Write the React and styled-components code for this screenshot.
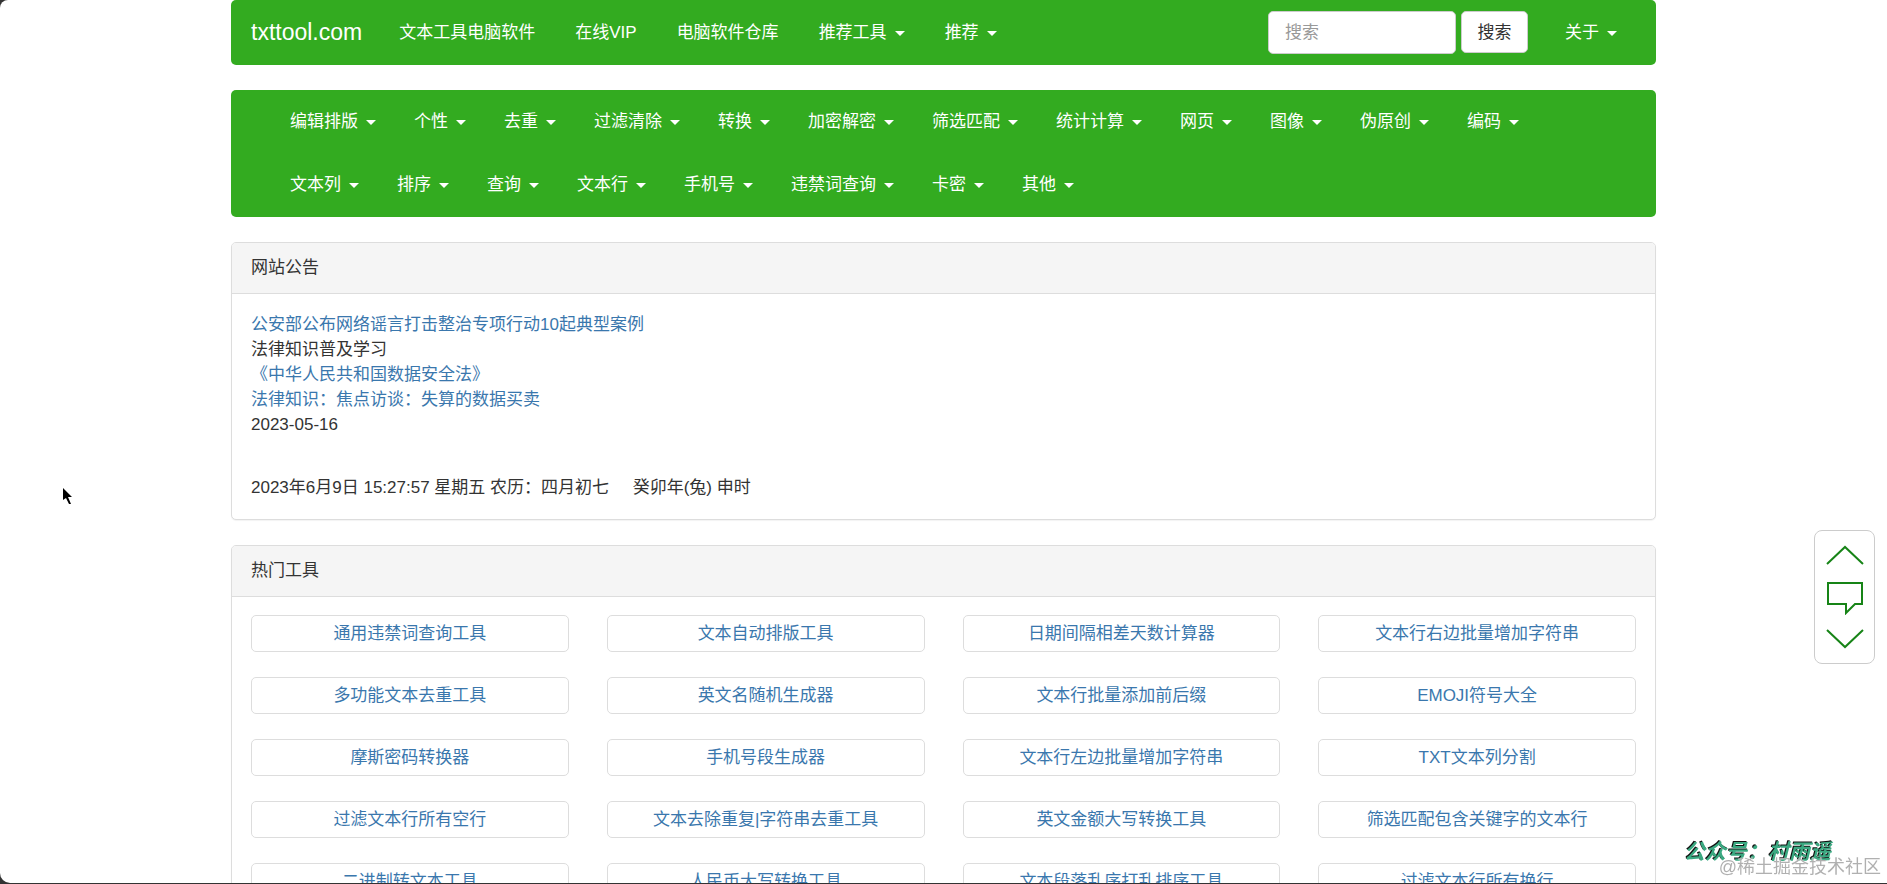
import React from "react";
import styled, { createGlobalStyle, css } from "styled-components";

const GlobalStyle = createGlobalStyle`
  *, *::before, *::after { box-sizing: border-box; }
  html { background: #333; }
  body {
    margin: 0;
    font-family: "Liberation Sans", "Noto Sans CJK SC", sans-serif;
    font-size: 17px;
    line-height: 25px;
    color: #333;
  }
  button, input { font: inherit; }
  a { color: #3a77ad; text-decoration: none; }
  ul { list-style: none; margin: 0; padding: 0; }
`;

const Screen = styled.div`
  position: relative;
  height: calc(100vh - 1px);
  overflow: hidden;
  background: #fff;
  border-radius: 8px 0 0 10px;
`;

const Container = styled.main`
  width: 100%;
  max-width: 1425px;
  margin: 0 auto;
  display: flex;
  flex-direction: column;
  gap: 25px;
`;

const bar = css`
  background: #33ab20;
  border-radius: 5px;
`;

const TopNav = styled.nav`
  ${bar}
  display: flex;
  flex-wrap: wrap;
  align-items: center;
  min-height: 65px;
  padding: 0 20px;
`;

const Brand = styled.a`
  color: #fff;
  font-size: 23px;
  margin-right: 17px;
`;

const NavList = styled.ul`
  display: flex;
  flex-wrap: wrap;
  flex: ${(p) => (p.$grow ? 1 : "none")};
`;

const CategoryNav = styled.nav`
  ${bar}
  padding: 0 40px 1px;
`;

const navItem = css`
  display: flex;
  align-items: center;
  height: 63px;
  padding: 0 ${(p) => p.$pad}px;
  color: #fff;
  white-space: nowrap;
`;

const NavLink = styled.a`
  ${navItem}
`;

const NavToggle = styled.button`
  ${navItem}
  gap: 8px;
  border: 0;
  background: none;
  cursor: pointer;
  &::after {
    content: "";
    margin-top: 2px;
    border: 5px solid transparent;
    border-top-color: #fff;
    border-bottom: 0;
  }
`;

const SearchForm = styled.form`
  display: flex;
  align-items: flex-start;
  gap: 5px;
  margin-right: 18px;
`;

const SearchInput = styled.input`
  width: 188px;
  height: 43px;
  padding: 0 16px;
  border: 1px solid #ccc;
  border-radius: 5px;
  background: #fff;
  &::placeholder { color: #999; opacity: 1; }
`;

const SearchButton = styled.button`
  width: 67px;
  height: 42px;
  padding: 0;
  border: 1px solid #ccc;
  border-radius: 5px;
  background: #fff;
  color: #333;
`;

const Panel = styled.section`
  border: 1px solid #ddd;
  border-radius: 5px;
  background: #fff;
  box-shadow: 0 1px 1px rgba(0, 0, 0, 0.05);
`;

const PanelHeading = styled.h2`
  margin: 0;
  padding: 12px 19px 13px;
  border-bottom: 1px solid #ddd;
  background: #f5f5f5;
  border-radius: 4px 4px 0 0;
  font-size: 17px;
  font-weight: 400;
`;

const PanelBody = styled.div`
  padding: 18px 19px 19px;
`;

const Notice = styled.p`
  margin: 0 0 38px;
`;

const Clock = styled.p`
  margin: 0;
  white-space: pre-wrap;
`;

const ToolGrid = styled.ul`
  display: grid;
  grid-template-columns: repeat(4, 1fr);
  gap: 25px 38px;
`;

const ToolLink = styled.a`
  display: block;
  padding: 5px;
  border: 1px solid #ddd;
  border-radius: 5px;
  text-align: center;
`;

const SideTools = styled.aside`
  position: fixed;
  right: 12px;
  bottom: 220px;
  display: flex;
  flex-direction: column;
  align-items: center;
  justify-content: space-between;
  width: 61px;
  height: 134px;
  padding: 14px 0;
  border: 1px solid #ccc;
  border-radius: 8px;
  background: #fff;
`;

const SideButton = styled.button`
  display: block;
  padding: 0;
  border: 0;
  background: none;
  svg { display: block; fill: none; stroke: #178417; stroke-width: 2; }
`;

const AccountMark = styled.div`
  position: fixed;
  right: 56px;
  bottom: 20px;
  color: #3aa981;
  font-size: 21px;
  font-style: italic;
  font-weight: 700;
  text-shadow: -1px -1px 0 #111;
`;

const CommunityMark = styled.div`
  position: fixed;
  right: 6px;
  bottom: 4px;
  color: rgba(150, 150, 150, 0.75);
  font-size: 18px;
  text-shadow: 0 0 1px #fff;
`;

const Pointer = styled.svg`
  position: fixed;
  left: 63px;
  top: 488px;
`;

const topLinks = ["文本工具电脑软件", "在线VIP", "电脑软件仓库"];
const topMenus = ["推荐工具", "推荐"];
const categories = [
  "编辑排版", "个性", "去重", "过滤清除", "转换", "加密解密", "筛选匹配",
  "统计计算", "网页", "图像", "伪原创", "编码", "文本列", "排序", "查询",
  "文本行", "手机号", "违禁词查询", "卡密", "其他",
];
const tools = [
  "通用违禁词查询工具", "文本自动排版工具", "日期间隔相差天数计算器", "文本行右边批量增加字符串",
  "多功能文本去重工具", "英文名随机生成器", "文本行批量添加前后缀", "EMOJI符号大全",
  "摩斯密码转换器", "手机号段生成器", "文本行左边批量增加字符串", "TXT文本列分割",
  "过滤文本行所有空行", "文本去除重复|字符串去重工具", "英文金额大写转换工具", "筛选匹配包含关键字的文本行",
  "二进制转文本工具", "人民币大写转换工具", "文本段落乱序打乱排序工具", "过滤文本行所有换行",
];

export default function App() {
  return (
    <Screen>
      <GlobalStyle />
      <Container>
        <TopNav aria-label="主导航">
          <Brand href="#">txttool.com</Brand>
          <NavList $grow>
            {topLinks.map((t) => (
              <li key={t}><NavLink $pad={20} href="#">{t}</NavLink></li>
            ))}
            {topMenus.map((t) => (
              <li key={t}><NavToggle $pad={20} type="button">{t}</NavToggle></li>
            ))}
          </NavList>
          <SearchForm role="search" onSubmit={(e) => e.preventDefault()}>
            <SearchInput type="text" placeholder="搜索" aria-label="搜索" />
            <SearchButton type="submit">搜索</SearchButton>
          </SearchForm>
          <NavToggle $pad={19} type="button">关于</NavToggle>
        </TopNav>

        <CategoryNav aria-label="工具分类">
          <NavList>
            {categories.map((t) => (
              <li key={t}><NavToggle $pad={19} type="button">{t}</NavToggle></li>
            ))}
          </NavList>
        </CategoryNav>

        <Panel>
          <PanelHeading>网站公告</PanelHeading>
          <PanelBody>
            <Notice>
              <a href="#">公安部公布网络谣言打击整治专项行动10起典型案例</a><br />
              法律知识普及学习<br />
              <a href="#">《中华人民共和国数据安全法》</a><br />
              <a href="#">法律知识：焦点访谈：失算的数据买卖</a><br />
              2023-05-16
            </Notice>
            <Clock>{"2023年6月9日 15:27:57 星期五 农历：四月初七\u00a0\u00a0\u00a0\u00a0 癸卯年(兔) 申时"}</Clock>
          </PanelBody>
        </Panel>

        <Panel>
          <PanelHeading>热门工具</PanelHeading>
          <PanelBody>
            <ToolGrid>
              {tools.map((t) => (
                <li key={t}><ToolLink href="#">{t}</ToolLink></li>
              ))}
            </ToolGrid>
          </PanelBody>
        </Panel>
      </Container>

      <SideTools aria-label="快捷操作">
        <SideButton type="button" aria-label="返回顶部">
          <svg width="38" height="20" viewBox="0 0 38 20"><path d="M1 19 19 2l18 17" /></svg>
        </SideButton>
        <SideButton type="button" aria-label="留言">
          <svg width="38" height="36" viewBox="0 0 38 36"><path d="M2 4h34v21h-7l-9 9v-9H2z" /></svg>
        </SideButton>
        <SideButton type="button" aria-label="到底部">
          <svg width="38" height="20" viewBox="0 0 38 20"><path d="M1 1l18 17L37 1" /></svg>
        </SideButton>
      </SideTools>

      <AccountMark>公众号：村雨遥</AccountMark>
      <CommunityMark>@稀土掘金技术社区</CommunityMark>
      <Pointer width="9" height="17" viewBox="0 0 9 17" aria-hidden="true">
        <path d="M0 0v12l3-2 3 6h2l-3-7h4z" fill="#000" />
      </Pointer>
    </Screen>
  );
}
